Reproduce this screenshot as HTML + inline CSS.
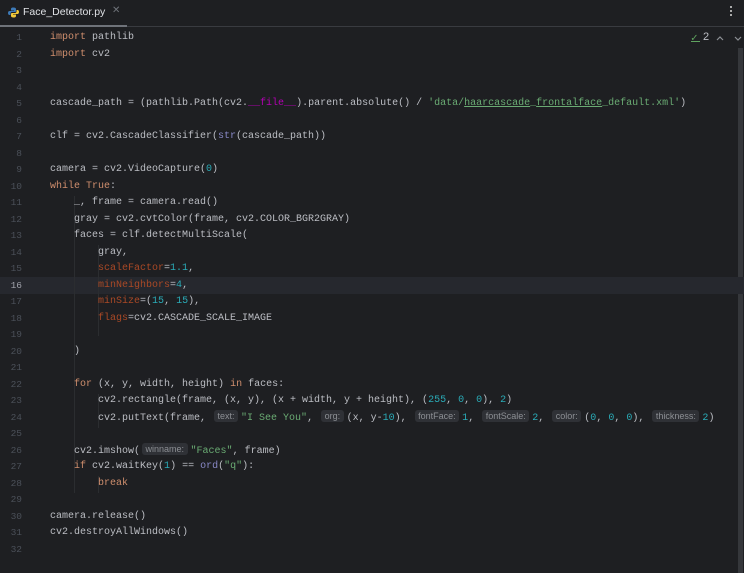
<!DOCTYPE html>
<html><head><meta charset="utf-8"><style>
*{margin:0;padding:0;box-sizing:border-box}
body{width:744px;height:573px;background:#1e1f22;overflow:hidden;position:relative;font-family:"Liberation Mono",monospace;font-size:10px;color:#bcbec4}
.tabbar{position:absolute;left:0;top:0;width:744px;height:27px;border-bottom:1px solid #393b40;background:#1e1f22}
.tab{position:absolute;left:23px;top:6px;font-family:"Liberation Sans",sans-serif;font-size:10.5px;color:#dfe1e5}
.tabx{position:absolute;left:112px;top:5px;font-family:"Liberation Sans",sans-serif;font-size:10px;color:#6f737a}
.uline{position:absolute;left:0;top:25px;width:127px;height:2px;background:#6f737a}
.row{position:absolute;left:0;width:744px;height:16.5px;line-height:16.5px}
.ln{text-align:right;color:#4b5059;font-size:9.5px}
.code{white-space:pre;}
.k{color:#cf8e6d}.n{color:#2aacb8}.s{color:#6aab73}.p{color:#aa4926}.m{color:#b200b2}.b{color:#8888c6}
.h{display:inline-block;font-family:"Liberation Sans",sans-serif;font-size:9px;color:#8c8f94;background:#2f3136;border-radius:3px;padding:0 3.5px;line-height:12px;margin:0 3px 0 2px;vertical-align:1px}
.g{position:absolute;width:1px;background:#2b2d30}
</style></head><body>
<div class="tabbar"></div>
<svg style="position:absolute;left:8px;top:7px" width="11" height="11" viewBox="0 0 11 11"><path d="M5.5 0.5C3 0.5 3 1.5 3 2.5V3.5H6V4H1.5C0.5 4 0 5 0 6s.5 2 1.5 2H2.5V6.5C2.5 5.5 3.2 5 4 5H7C7.8 5 8 4.5 8 4V2C8 1 7 .5 5.5 .5z" fill="#3d7ab8"/><path d="M5.5 10.5C8 10.5 8 9.5 8 8.5V7.5H5V7H9.5C10.5 7 11 6 11 5s-.5-2-1.5-2H8.5V4.5C8.5 5.5 7.8 6 7 6H4C3.2 6 3 6.5 3 7V9C3 10 4 10.5 5.5 10.5z" fill="#f0c83a"/></svg>
<div class="tab">Face_Detector.py</div><div class="tabx">✕</div>
<div class="uline"></div>
<div style="position:absolute;left:730px;top:6px;width:2px;height:2px;background:#aaa;box-shadow:0 4px #aaa,0 8px #aaa"></div>
<div style="position:absolute;left:691px;top:31px;color:#5fa35f;font-size:11px">✓</div>
<div style="position:absolute;left:691px;top:41px;width:9px;height:1px;background:#5fa35f"></div>
<div style="position:absolute;left:703px;top:31px;font-family:'Liberation Sans',sans-serif;font-size:11px;color:#bcbec4">2</div>
<svg style="position:absolute;left:716px;top:34px" width="26" height="8"><path d="M1 6L4 3L7 6M19 3L22 6L25 3" stroke="#8c8f94" fill="none" stroke-width="1.2"/></svg>
<div style="position:absolute;left:738px;top:48px;width:5px;height:525px;background:#35373b"></div>
<div class="row" style="top:277px;background:#26282e"></div>
<div class="g" style="left:74px;top:196px;height:297px"></div>
<div class="g" style="left:98px;top:245px;height:91px"></div>
<div class="g" style="left:98px;top:394px;height:34px"></div>
<div class="g" style="left:98px;top:476px;height:17px"></div>
<div id="L"></div>
<script>
var lines=[
'<span class="k">import</span> pathlib',
'<span class="k">import</span> cv2','',
'',
'cascade_path = (pathlib.Path(cv2.<span class="m">__file__</span>).parent.absolute() / <span class="s">\'data/<u>haarcascade</u>_<u>frontalface</u>_default.xml\'</span>)',
'',
'clf = cv2.CascadeClassifier(<span class="b">str</span>(cascade_path))',
'',
'camera = cv2.VideoCapture(<span class="n">0</span>)',
'<span class="k">while True</span>:',
'    _, frame = camera.read()',
'    gray = cv2.cvtColor(frame, cv2.COLOR_BGR2GRAY)',
'    faces = clf.detectMultiScale(',
'        gray,',
'        <span class="p">scaleFactor</span>=<span class="n">1.1</span>,',
'        <span class="p">minNeighbors</span>=<span class="n">4</span>,',
'        <span class="p">minSize</span>=(<span class="n">15</span>, <span class="n">15</span>),',
'        <span class="p">flags</span>=cv2.CASCADE_SCALE_IMAGE',
'',
'    )',
'',
'    <span class="k">for</span> (x, y, width, height) <span class="k">in</span> faces:',
'        cv2.rectangle(frame, (x, y), (x + width, y + height), (<span class="n">255</span>, <span class="n">0</span>, <span class="n">0</span>), <span class="n">2</span>)',
'        cv2.putText(frame, <span class="h">text:</span><span class="s">"I See You"</span>, <span class="h">org:</span>(x, y-<span class="n">10</span>), <span class="h">fontFace:</span><span class="n">1</span>, <span class="h">fontScale:</span><span class="n">2</span>, <span class="h">color:</span>(<span class="n">0</span>, <span class="n">0</span>, <span class="n">0</span>), <span class="h">thickness:</span><span class="n">2</span>)',
'',
'    cv2.imshow(<span class="h">winname:</span><span class="s">"Faces"</span>, frame)',
'    <span class="k">if</span> cv2.waitKey(<span class="n">1</span>) == <span class="b">ord</span>(<span class="s">"q"</span>):',
'        <span class="k">break</span>',
'',
'camera.release()',
'cv2.destroyAllWindows()',
''];
var h='';
for(var i=0;i<32;i++){var t=30+16.5*i;
h+='<div class="row ln" style="top:'+t+'px;width:22px;'+(i==15?'color:#a1a3ab':'')+'">'+(i+1)+'</div>';
h+='<div class="row code" style="top:'+t+'px;left:50px;width:auto">'+lines[i]+'</div>';}
document.getElementById('L').innerHTML=h;
</script>
</body></html>
